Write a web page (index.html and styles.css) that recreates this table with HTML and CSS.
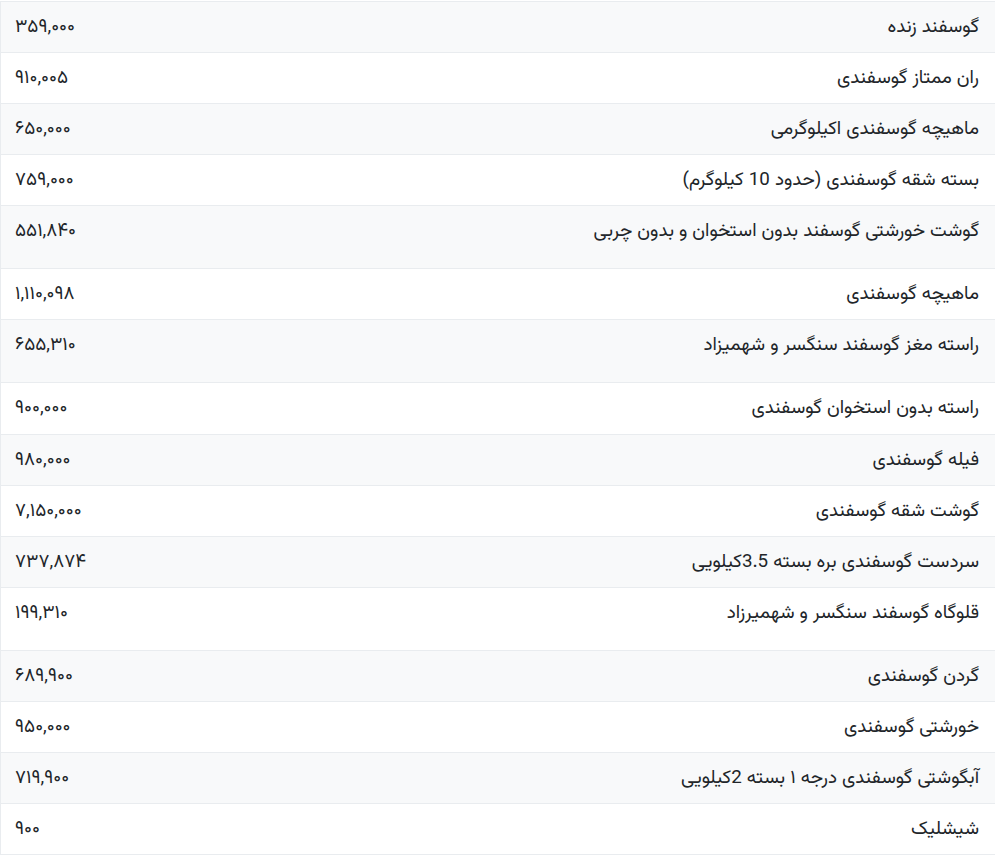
FILE: index.html
```html
<!DOCTYPE html>
<html lang="fa" dir="rtl">
<head>
<meta charset="utf-8">
<title>قیمت گوشت گوسفندی</title>
<link rel="stylesheet" href="styles.css">
</head>
<body>
<table class="price-table">
<tbody>
<tr><td class="name">گوسفند زنده</td><td class="price">۳۵۹,۰۰۰</td></tr>
<tr><td class="name">ران ممتاز گوسفندی</td><td class="price">۹۱۰,۰۰۵</td></tr>
<tr><td class="name">ماهیچه گوسفندی اکیلوگرمی</td><td class="price">۶۵۰,۰۰۰</td></tr>
<tr><td class="name">بسته شقه گوسفندی (حدود 10 کیلوگرم)</td><td class="price">۷۵۹,۰۰۰</td></tr>
<tr class="tall"><td class="name">گوشت خورشتی گوسفند بدون استخوان و بدون چربی</td><td class="price">۵۵۱,۸۴۰</td></tr>
<tr><td class="name">ماهیچه گوسفندی</td><td class="price">۱,۱۱۰,۰۹۸</td></tr>
<tr class="tall"><td class="name">راسته مغز گوسفند سنگسر و شهمیزاد</td><td class="price">۶۵۵,۳۱۰</td></tr>
<tr class="plus"><td class="name">راسته بدون استخوان گوسفندی</td><td class="price">۹۰۰,۰۰۰</td></tr>
<tr><td class="name">فیله گوسفندی</td><td class="price">۹۸۰,۰۰۰</td></tr>
<tr><td class="name">گوشت شقه گوسفندی</td><td class="price">۷,۱۵۰,۰۰۰</td></tr>
<tr><td class="name">سردست گوسفندی بره بسته 3.5کیلویی</td><td class="price">۷۳۷,۸۷۴</td></tr>
<tr class="tall"><td class="name">قلوگاه گوسفند سنگسر و شهمیرزاد</td><td class="price">۱۹۹,۳۱۰</td></tr>
<tr><td class="name">گردن گوسفندی</td><td class="price">۶۸۹,۹۰۰</td></tr>
<tr><td class="name">خورشتی گوسفندی</td><td class="price">۹۵۰,۰۰۰</td></tr>
<tr><td class="name">آبگوشتی گوسفندی درجه ۱ بسته 2کیلویی</td><td class="price">۷۱۹,۹۰۰</td></tr>
<tr><td class="name">شیشلیک</td><td class="price">۹۰۰</td></tr>
</tbody>
</table>
</body>
</html>
```

FILE: styles.css
```css
html, body {
  margin: 0;
  padding: 0;
  background: #ffffff;
}
body {
  padding-top: 1px;
  font-family: "Vazirmatn", "Vazir", "Noto Sans Arabic", "DejaVu Sans", sans-serif;
  font-size: 18.8px;
  color: #212529;
}
.price-table {
  width: 995px;
  border-collapse: collapse;
  border-top: 1px solid #e9ecef;
  border-left: 1px solid #e9ecef;
}
.price-table tr {
  height: 51px;
}
.price-table tr.plus {
  height: 52px;
}
.price-table tr.tall {
  height: 63px;
}
.price-table tr:nth-child(odd) {
  background: #f8f9fa;
}
.price-table td {
  border-bottom: 1px solid #e9ecef;
  padding: 14px 16px 12px;
  vertical-align: top;
  line-height: 24px;
}
.price-table td.name {
  text-align: right;
}
.price-table td.price {
  text-align: left;
  width: 200px;
  padding-left: 14px;
}
```
